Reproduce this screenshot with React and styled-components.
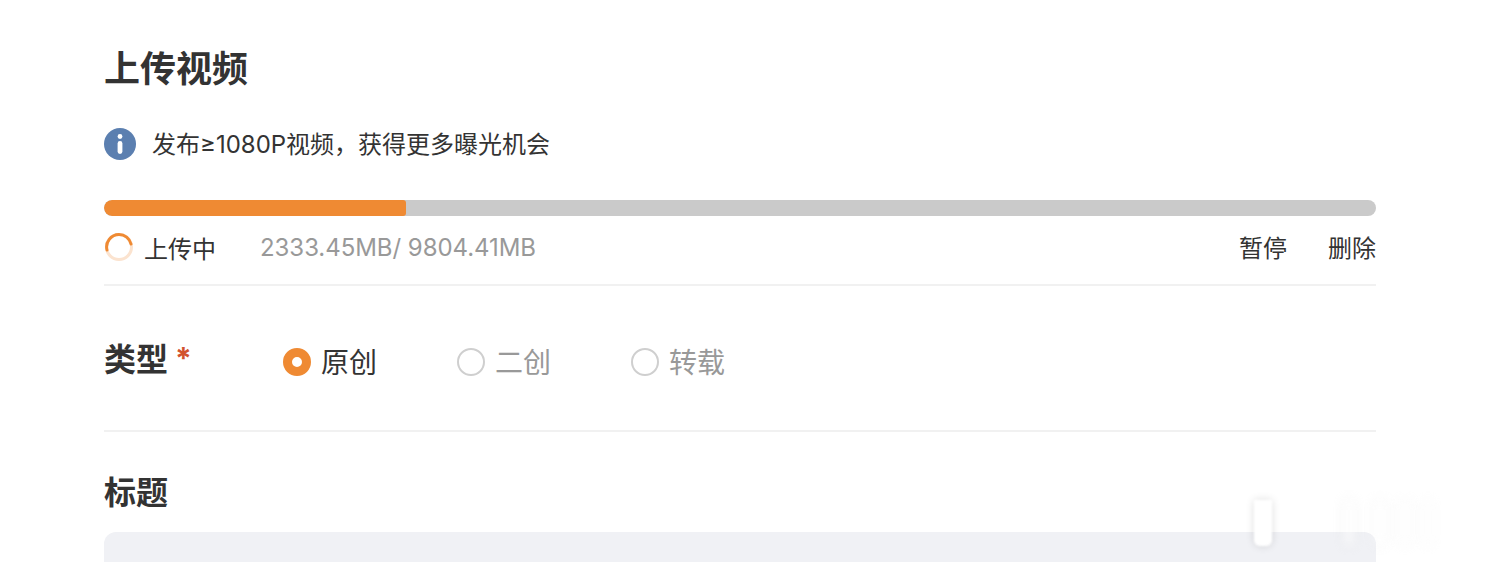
import React from "react";
import styled, { createGlobalStyle } from "styled-components";

const GlobalStyle = createGlobalStyle`
  html, body {
    margin: 0;
    padding: 0;
    height: 100%;
    overflow: hidden;
    background: #fff;
    font-family: Inter, "Noto Sans CJK SC", sans-serif;
  }
`;

const Page = styled.div`
  position: relative;
  width: 1508px;
  height: 562px;
  overflow: hidden;
  padding: 0 132px 0 104px;
  box-sizing: border-box;
`;

const Title = styled.h1`
  margin: 0;
  padding-top: 48px;
  font-size: 36px;
  line-height: 42px;
  font-weight: 700;
  color: #333;
`;

const Notice = styled.div`
  display: flex;
  align-items: center;
  gap: 16px;
  margin-top: 38px;
  height: 32px;
  font-size: 24px;
  color: #333;
`;

const NoticeText = styled.span`
  padding-bottom: 4px;
`;

const Bar = styled.div`
  margin-top: 40px;
  height: 16px;
  border-radius: 8px;
  background: #cacaca;
  overflow: hidden;
`;

const BarFill = styled.div`
  height: 100%;
  background: #ef8a33;
  border-radius: 8px 3px 3px 8px;
`;

const StatusRow = styled.div`
  display: flex;
  align-items: center;
  height: 62px;
  padding-bottom: 6px;
  border-bottom: 2px solid #f1f1f1;
  font-size: 24px;
  color: #333;
`;

const Spinner = styled.svg`
  width: 30px;
  height: 30px;
  margin-right: 10px;
  flex: none;
`;

const Sizes = styled.span`
  margin-left: 44px;
  color: #999;
  letter-spacing: -0.05px;
`;

const Actions = styled.div`
  display: flex;
  gap: 41px;
  margin-left: auto;
  padding-bottom: 2px;
`;

const TypeRow = styled.div`
  display: flex;
  align-items: center;
  height: 136px;
  padding-top: 8px;
  border-bottom: 2px solid #f1f1f1;
`;

const Label = styled.div`
  font-size: 32px;
  line-height: 40px;
  font-weight: 700;
  color: #333;
`;

const TypeLabel = styled(Label)`
  display: flex;
  width: 179px;
  flex: none;
  margin-top: -5px;
`;

const Star = styled.span`
  margin-left: 7px;
  margin-top: -2px;
  color: #d2522f;
  font-size: 30px;
  font-weight: 700;
`;

const Radio = styled.label`
  display: flex;
  align-items: center;
  gap: 10px;
  width: ${(p) => p.$width}px;
  font-size: 28px;
  color: ${(p) => (p.$active ? "#333" : "#999")};
`;

const RadioText = styled.span`
  padding-bottom: 2px;
`;

const RadioDot = styled.span`
  width: 28px;
  height: 28px;
  box-sizing: border-box;
  border-radius: 50%;
  flex: none;
  border: ${(p) => (p.$active ? "9px solid #ef8a33" : "2px solid #cfcfcf")};
  background: #fff;
`;

const TitleLabel = styled(Label)`
  margin-top: 41px;
`;

const TitleInput = styled.div`
  margin-top: 19px;
  height: 60px;
  border-radius: 12px;
  background: #f0f1f5;
`;

// faint watermark in the bottom right corner
const Watermark = styled.div`
  position: absolute;
  left: 1254px;
  top: 500px;
  width: 250px;
  height: 46px;
  display: flex;
  align-items: stretch;
  pointer-events: none;
`;

const MarkStroke = styled.div`
  width: ${(p) => p.$w}px;
  margin-right: ${(p) => p.$gap}px;
  background: #fff;
  border-radius: 0 0 6px 6px;
  opacity: ${(p) => p.$o};
  box-shadow: 0 0 8px rgba(0, 0, 0, 0.14);
  filter: blur(${(p) => p.$blur}px);
`;

const InfoIcon = () => (
  <svg width="32" height="32" viewBox="0 0 32 32">
    <circle cx="16" cy="16" r="16" fill="#5b7fb0" />
    <circle cx="16" cy="8.5" r="2.4" fill="#fff" />
    <rect x="13.6" y="13" width="4.8" height="13" rx="2.4" fill="#fff" />
  </svg>
);

const App = () => {
  return (
    <Page>
      <GlobalStyle />
      <Title>上传视频</Title>
      <Notice>
        <InfoIcon />
        <NoticeText>发布≥1080P视频，获得更多曝光机会</NoticeText>
      </Notice>
      <Bar>
        <BarFill style={{ width: `${(302 / 1272) * 100}%` }} />
      </Bar>
      <StatusRow>
        <Spinner viewBox="0 0 30 30">
          <circle cx="15" cy="15" r="12.5" fill="none" stroke="#fbe3cf" strokeWidth="3" />
          <path
            d="M3 18 A12.5 12.5 0 0 1 15 2.5 A12.5 12.5 0 0 1 27 12"
            fill="none"
            stroke="#ef8a33"
            strokeWidth="3"
            strokeLinecap="round"
          />
        </Spinner>
        <span>上传中</span>
        <Sizes>2333.45MB/ 9804.41MB</Sizes>
        <Actions>
          <span>暂停</span>
          <span>删除</span>
        </Actions>
      </StatusRow>
      <TypeRow>
        <TypeLabel>
          类型<Star>*</Star>
        </TypeLabel>
        <Radio $active $width={174}>
          <RadioDot $active />
          <RadioText>原创</RadioText>
        </Radio>
        <Radio $width={174}>
          <RadioDot />
          <RadioText>二创</RadioText>
        </Radio>
        <Radio $width={120}>
          <RadioDot />
          <RadioText>转载</RadioText>
        </Radio>
      </TypeRow>
      <TitleLabel>标题</TitleLabel>
      <TitleInput />
      <Watermark>
        <MarkStroke $w={18} $gap={72} $o={1} $blur={1} />
        <MarkStroke $w={10} $gap={20} $o={0.5} $blur={4} />
        <MarkStroke $w={12} $gap={14} $o={0.4} $blur={4} />
        <MarkStroke $w={10} $gap={14} $o={0.35} $blur={4} />
        <MarkStroke $w={8} $gap={14} $o={0.3} $blur={4} />
      </Watermark>
    </Page>
  );
};

export default App;
